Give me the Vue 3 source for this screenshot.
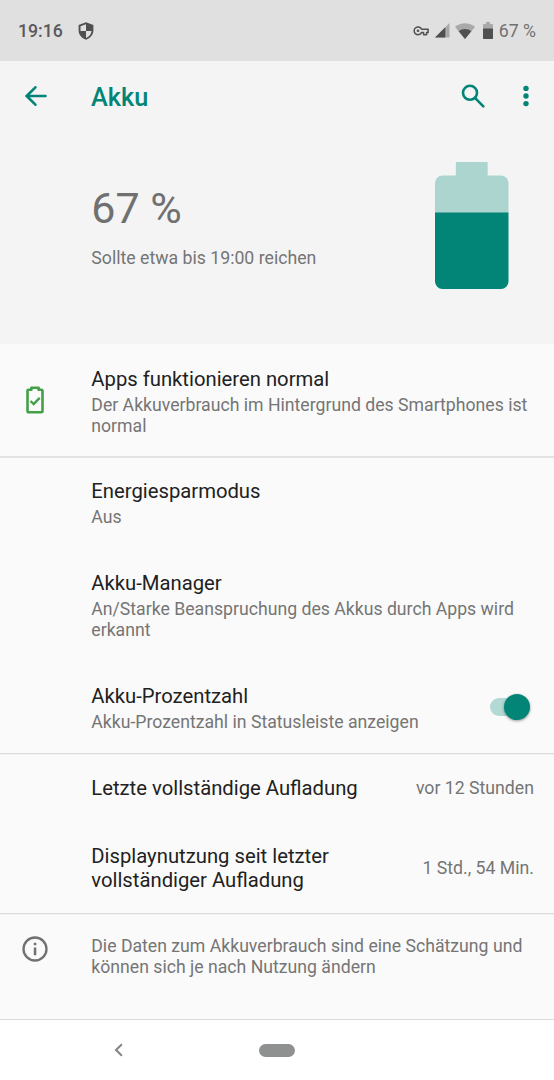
<template>
  <div class="screen">
    <!-- Statusleiste -->
    <header class="status-bar">
      <span class="status-time">19:16</span>
      <svg class="status-shield" viewBox="0 0 16 18">
        <path fill="#505050" fill-rule="evenodd" d="M8 0.2 15.4 3v5.6c0 4.200-3 7.700-7.400 9.100C3.600 16.300.6 12.800.6 8.600V3zM8 2.200 2.500 4.200V9H8v6.900c3.200-1.100 5.300-3.600 5.500-6.900H8z" />
      </svg>
      <div class="status-right">
        <svg class="status-key" viewBox="0 0 16 12">
          <path fill="none" stroke="#505050" stroke-width="1.500" stroke-linejoin="round" d="M8.600 4.200h6.500v3.200h-1.500v2.300h-3V7.400h-2A3.900 3.900 0 1 1 8.600 4.200z" />
          <circle cx="5" cy="5.800" r="1.300" fill="#505050" />
        </svg>
        <svg class="status-signal" viewBox="0 0 15 15">
          <path fill="#a8aaa9" d="M14.500 0v14.500H0z" />
          <path fill="#505050" d="M10.300 4.200v10.300H0z" />
        </svg>
        <svg class="status-wifi" viewBox="0 0 20 16">
          <path fill="#a8aaa9" d="M0 4C5.800-1 14.200-1 20 4L10 16z" />
          <path fill="#505050" d="M3.700 8.300C7.200 5.200 12.800 5.200 16.300 8.300L10 16z" />
        </svg>
        <svg class="status-battery" viewBox="0 0 10 17">
          <path fill="#a8aaa9" d="M3 0h4v2h2.200q.8 0 .8.800V7H0V2.800Q0 2 .8 2H3z" />
          <path fill="#505050" d="M0 6.500h10v9.700q0 .8-.8.800H.8q-.8 0-.8-.8z" />
        </svg>
        <span class="status-percent">67 %</span>
      </div>
    </header>

    <!-- Kopfbereich -->
    <section class="hero">
      <nav class="toolbar">
        <button type="button" class="icon-btn back-btn" aria-label="Zurück">
          <svg viewBox="0 0 22 20">
            <path class="line" d="M20.500 10H1.800M10.400 1.300 1.700 10l8.700 8.700" />
          </svg>
        </button>
        <h1>Akku</h1>
        <button type="button" class="icon-btn search-btn" aria-label="Suchen">
          <svg viewBox="0 0 24 24">
            <circle class="line" cx="9" cy="8.800" r="7" />
            <path class="line" d="m14 13.800 8.300 8.500" />
          </svg>
        </button>
        <button type="button" class="icon-btn more-btn" aria-label="Mehr">
          <svg viewBox="0 0 6 22">
            <circle cx="3" cy="3.400" r="2.700" />
            <circle cx="3" cy="11" r="2.700" />
            <circle cx="3" cy="18.600" r="2.700" />
          </svg>
        </button>
      </nav>
      <div class="battery">
        <div class="battery-text">
          <p class="battery-level">{{ level }} %</p>
          <p class="battery-estimate">Sollte etwa bis 19:00 reichen</p>
        </div>
        <svg class="battery-image" viewBox="0 0 74 127" preserveAspectRatio="none">
          <path fill="#acd5d0" d="M21 0h32v13.500h13.500a7.500 7.500 0 0 1 7.500 7.500V51H0V21a7.500 7.500 0 0 1 7.500-7.500H21z" />
          <path fill="#028576" d="M0 50.500h74v69a7.500 7.500 0 0 1-7.500 7.500h-59a7.500 7.500 0 0 1-7.500-7.500z" />
        </svg>
      </div>
    </section>

    <!-- Einstellungen -->
    <main>
      <section class="group status">
        <div class="row tip">
          <svg class="row-icon tip-icon" viewBox="0 0 18 28">
            <path fill="none" stroke="#43a047" stroke-width="2.600" stroke-linejoin="round" d="M5.400 3.700V1.700h7.200v2h2.700q1.200 0 1.200 1.200v20.200q0 1.200-1.200 1.200H2.700q-1.200 0-1.200-1.200V4.900q0-1.200 1.200-1.200z" />
            <path fill="none" stroke="#43a047" stroke-width="2.400" d="m4.500 15 3.200 3.100 6-6.200" />
          </svg>
          <div class="row-text">
            <h2>Apps funktionieren normal</h2>
            <p>Der Akkuverbrauch im Hintergrund des Smartphones ist normal</p>
          </div>
        </div>
      </section>

      <section class="group settings">
        <div v-for="item in settings" :key="item.title" class="row">
          <div class="row-text">
            <h2>{{ item.title }}</h2>
            <p>{{ item.summary }}</p>
          </div>
        </div>
        <div class="row">
          <div class="row-text">
            <h2>Akku-Prozentzahl</h2>
            <p>Akku-Prozentzahl in Statusleiste anzeigen</p>
          </div>
          <button
            type="button"
            class="switch"
            :class="{ on: showPercent }"
            role="switch"
            aria-label="Akku-Prozentzahl"
            :aria-checked="showPercent"
            @click="showPercent = !showPercent"
          >
            <span class="switch-thumb"></span>
          </button>
        </div>
      </section>

      <section class="group usage">
        <div v-for="item in usage" :key="item.title" class="row">
          <h2>{{ item.title }}</h2>
          <span class="row-value">{{ item.value }}</span>
        </div>
      </section>

      <section class="group footer">
        <svg class="row-icon info-icon" viewBox="0 0 26 26">
          <circle cx="13" cy="13" r="11.500" fill="none" stroke="#707070" stroke-width="2.300" />
          <path fill="#707070" d="M11.800 6.700h2.500v2.500h-2.500zM11.800 11.500h2.500v7.700h-2.500z" />
        </svg>
        <p>Die Daten zum Akkuverbrauch sind eine Schätzung und können sich je nach Nutzung ändern</p>
      </section>
    </main>

    <!-- Navigationsleiste -->
    <footer class="nav-bar">
      <svg class="nav-back" viewBox="0 0 9 14">
        <path fill="none" stroke="#828483" stroke-width="2" d="M7.900 1.200 2 7l5.900 5.800" />
      </svg>
      <span class="nav-home"></span>
    </footer>
  </div>
</template>

<script setup>
import { ref } from 'vue'

const level = ref(67)
const showPercent = ref(true)

const settings = [
  { title: 'Energiesparmodus', summary: 'Aus' },
  { title: 'Akku-Manager', summary: 'An/Starke Beanspruchung des Akkus durch Apps wird erkannt' }
]

const usage = [
  { title: 'Letzte vollständige Aufladung', value: 'vor 12 Stunden' },
  { title: 'Displaynutzung seit letzter vollständiger Aufladung', value: '1 Std., 54 Min.' }
]
</script>

<style>
body {
  margin: 0;
}
</style>

<style scoped>
.screen {
  width: 554px;
  height: 1080px;
  display: flex;
  flex-direction: column;
  overflow: hidden;
  background: #fafafa;
  color: #212121;
  font-family: Roboto, "Noto Sans", sans-serif;
}

h1,
h2,
p {
  margin: 0;
}

svg {
  display: block;
  flex-shrink: 0;
}

/* ===== Statusleiste ===== */
.status-bar {
  flex-shrink: 0;
  height: 61px;
  box-sizing: border-box;
  display: flex;
  align-items: center;
  padding: 0 18px;
  background: #e0e0e0;
  color: #5a5a5a;
  font-size: 17.700px;
}

.status-time {
  font-weight: 500;
}

.status-shield {
  width: 16px;
  height: 18px;
  margin-left: 15px;
}

.status-right {
  display: flex;
  align-items: center;
  margin-left: auto;
}

.status-key {
  width: 16px;
  height: 12px;
}

.status-signal {
  width: 15px;
  height: 15px;
  margin-left: 6px;
}

.status-wifi {
  width: 20px;
  height: 16px;
  margin-left: 5px;
}

.status-battery {
  width: 10px;
  height: 17px;
  margin-left: 8px;
}

.status-percent {
  margin-left: 6px;
  color: #707070;
}

/* ===== Kopfbereich ===== */
.hero {
  flex-shrink: 0;
  height: 283px;
  background: #f4f4f4;
}

.toolbar {
  height: 70px;
  display: flex;
  align-items: center;
  padding: 0 25px;
}

.toolbar h1 {
  flex: 1;
  margin: 2px 0 0 44px;
  color: #028576;
  font-size: 25.300px;
  font-weight: 500;
}

.icon-btn {
  padding: 0;
  border: 0;
  background: transparent;
  cursor: pointer;
}

.icon-btn svg {
  fill: #028576;
}

.icon-btn .line {
  fill: none;
  stroke: #028576;
  stroke-width: 2.600;
  stroke-linecap: round;
}

.back-btn svg {
  width: 22px;
  height: 20px;
}

.search-btn svg {
  width: 24px;
  height: 24px;
}

.more-btn {
  margin-left: 38px;
}

.more-btn svg {
  width: 6px;
  height: 22px;
}

.battery {
  display: flex;
  align-items: flex-start;
  justify-content: space-between;
  padding: 31px 45.500px 0 91.300px;
}

.battery-level {
  margin-top: 18px;
  color: #707070;
  font-size: 43px;
  line-height: 56px;
}

.battery-estimate {
  margin-top: 12px;
  color: #757575;
  font-size: 17.700px;
  line-height: 21px;
}

.battery-image {
  width: 73.500px;
  height: 127px;
}

/* ===== Listen ===== */
.group {
  border-bottom: 1px solid #dcdcdc;
  box-shadow: 0 1px #f1f1f1;
}

.group.status {
  height: 112px;
  border-bottom: 2px solid #e2e2e2;
  box-shadow: none;
}

.row {
  display: flex;
  align-items: center;
  padding: 21px 20px 22.300px 91.300px;
}

.row.tip {
  padding: 23px 20px 19.600px 26px;
}

.tip .row-text {
  margin-left: 47.300px;
}

.row-text {
  flex: 1;
}

h2 {
  font-size: 20.250px;
  font-weight: 400;
  line-height: 24px;
}

.row-text p,
.footer p {
  color: #757575;
  font-size: 17.670px;
  line-height: 20.700px;
}

.row-text p {
  margin-top: 4px;
}

.row-icon {
  flex-shrink: 0;
}

.tip-icon {
  width: 18px;
  height: 28px;
  margin-bottom: 3px;
}

.settings {
  height: 295px;
}

/* --- Schalter --- */
.switch {
  width: 40px;
  height: 18px;
  display: flex;
  align-items: center;
  margin: 0 4.500px 2px 0;
  padding: 0;
  border: 0;
  border-radius: 9px;
  background: #bdbdbd;
  cursor: pointer;
}

.switch-thumb {
  flex-shrink: 0;
  width: 26px;
  height: 26px;
  border-radius: 50%;
  background: #fafafa;
  box-shadow: 0 1px 3px rgba(0, 0, 0, 0.4);
}

.switch.on {
  justify-content: flex-end;
  background: #b3d9d4;
}

.switch.on .switch-thumb {
  background: #028576;
}

/* --- Nutzung --- */
.usage {
  height: 159px;
}

.usage .row {
  justify-content: space-between;
  padding: 22px 20px 22px 91.300px;
}

.usage .row + .row {
  padding-bottom: 21px;
}

.usage h2 {
  max-width: 290px;
}

.row-value {
  flex-shrink: 0;
  color: #757575;
  font-size: 17.700px;
}

/* --- Hinweis --- */
.footer {
  height: 106px;
  box-sizing: border-box;
  display: flex;
  align-items: flex-start;
  padding: 22px 20px 0 22.400px;
}

.info-icon {
  width: 26px;
  height: 26px;
}

.footer p {
  margin-left: 42.900px;
}

/* ===== Navigationsleiste ===== */
.nav-bar {
  flex: 1;
  display: grid;
  grid-template-columns: 1fr auto 1fr;
  align-items: center;
  background: #fff;
}

.nav-back {
  width: 9px;
  height: 14px;
  margin-left: 114px;
}

.nav-home {
  width: 36px;
  height: 13px;
  border-radius: 7px;
  background: #8f9190;
}
</style>
